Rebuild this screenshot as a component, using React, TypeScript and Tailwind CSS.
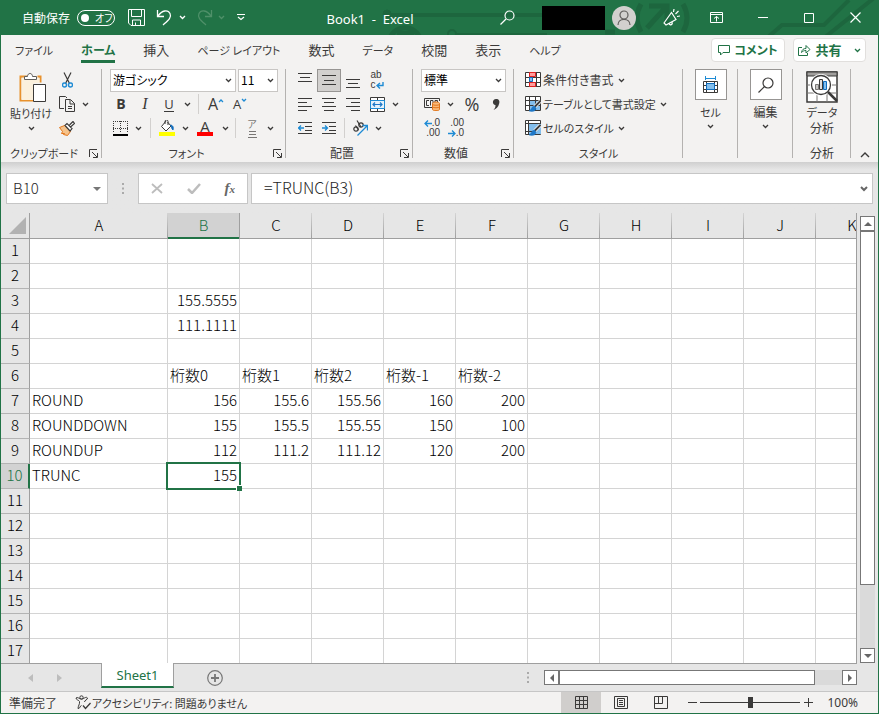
import React from "react";

type Kids = { children?: React.ReactNode };

const cellFont = "font-['Noto_Sans_CJK_JP',sans-serif]";

function Svg({ w, h, children, className = "" }: { w: number; h: number; className?: string } & Kids) {
  return (
    <svg width={w} height={h} viewBox={`0 0 ${w} ${h}`} fill="none" stroke="currentColor" className={`shrink-0 ${className}`} aria-hidden="true">
      {children}
    </svg>
  );
}

function Chev({ className = "" }: { className?: string }) {
  return (
    <Svg w={7} h={5} className={className}>
      <path d="M1 1l2.5 2.5L6 1" strokeWidth="1.3" />
    </Svg>
  );
}

function Btn({ label, className = "w-6", children }: { label: string; className?: string } & Kids) {
  return (
    <button type="button" aria-label={label} className={`flex h-6 shrink-0 items-center justify-center ${className}`}>
      {children}
    </button>
  );
}

function Drop({ label, className = "w-3" }: { label: string; className?: string }) {
  return (
    <Btn label={label} className={className}>
      <Chev />
    </Btn>
  );
}

function Group({ name, width, launcher, kana, children }: { name: string; width: string; launcher?: boolean; kana?: boolean } & Kids) {
  return (
    <section aria-label={name} className={`relative flex shrink-0 flex-col ${width}`}>
      <div className="h-[76px]">{children}</div>
      <div className="flex h-[18px] items-center">
        <span className={kana ? "flex-1 text-center text-[11px] whitespace-nowrap" : "flex-1 text-center whitespace-nowrap"}>{name}</span>
        {launcher && (
          <button type="button" aria-label={`${name}の設定`} className="mr-[3px] flex w-3 justify-center">
            <Svg w={9} h={9}>
              <path d="M.5 8V.5H8M3 3l5 5M8.5 4v4.500H4" />
            </Svg>
          </button>
        )}
      </div>
      <span className="absolute top-px right-0 bottom-1 w-px bg-[#b4b2b0]" />
    </section>
  );
}

function Row({ children, className = "pl-[7px]" }: { className?: string } & Kids) {
  return <div className={`flex h-6 items-center ${className}`}>{children}</div>;
}

function Combo({ label, value, width }: { label: string; value: string; width: string }) {
  return (
    <div className={`relative h-[23px] border border-[#c8c6c4] bg-white ${width}`}>
      <select aria-label={label} defaultValue={value} className="block h-full w-full appearance-none bg-transparent pl-[2px] text-xs text-black outline-none">
        <option>{value}</option>
      </select>
      <Chev className="pointer-events-none absolute top-2 right-[3px]" />
    </div>
  );
}

function Lines({ rows }: { rows: [number, number, number][] }) {
  return (
    <Svg w={14} h={17}>
      {rows.map(([x1, x2, y]) => (
        <path key={y} d={`M${x1} ${y}.5H${x2}`} />
      ))}
    </Svg>
  );
}

function StyleIcon({ kind }: { kind: "cond" | "table" | "cell" }) {
  return (
    <Svg w={16} h={16}>
      <path d="M.5.5h15v14H.5z" fill="#fff" />
      {kind === "cond" && (
        <>
          <path d="M.5 5.500h15M.5 10.500h15M4.500 1v13M11.500 1v13" />
          <path d="M4.500.5h6v4h-6zM4.500 10.500h6v4h-6z" fill="#ff9c9c" stroke="#e02020" />
          <path d="M4.500 5.500h3v4h-3z" fill="#83beec" stroke="#0f6cbd" />
        </>
      )}
      {kind === "table" && (
        <>
          <path d="M5 5h10v9H5z" fill="#83beec" stroke="none" />
          <path d="M.5 4.500h15M.5 9.500h15M4.500 1v13M10.500 1v13" />
        </>
      )}
      {kind === "cell" && (
        <>
          <path d="M4 4h12v10H4z" fill="#83beec" stroke="none" />
          <path d="M.5 3.500h15M3.500 1v13M.5 11.500h8" />
        </>
      )}
      {kind !== "cond" && (
        <>
          <path d="M15.500 5l-6 6" stroke="#f3f2f1" strokeWidth="3.500" />
          <path d="M15.500 5L9.500 11" strokeWidth="1.800" />
          <path d="M9.500 10c-3 0-2 3-5.500 5 3 1 7 .5 7-3z" fill="#1e78c8" stroke="#1e78c8" strokeWidth=".5" />
        </>
      )}
    </Svg>
  );
}

function TitleBar() {
  return (
    <header className="relative isolate flex h-[35px] shrink-0 items-center overflow-hidden bg-[#217346] text-xs text-white">
      <svg className="pointer-events-none absolute top-0 right-0 -z-10" width="500" height="35" viewBox="379 0 500 35" fill="none" stroke="#1d663e" aria-hidden="true">
        <circle cx="388" cy="14" r="4" fill="#1d663e" />
        <path d="M388 15h160" strokeWidth="4" />
        <path d="M390 46a16 16 0 1 1 32-4" strokeWidth="5" />
        <path d="M398 33h17" strokeWidth="4" />
        <circle cx="453" cy="34" r="4" strokeWidth="2" />
        <path d="M456 35h92" strokeWidth="4" />
        <path d="M606 32l10 0M642 4q-8 14 0 28M684 4q8 14 0 28" strokeWidth="5" />
        <path d="M650 6h18v18M668 6l-20 22" strokeWidth="5" />
        <path d="M768 38l15-13h42l25-25M825 38l50-40" strokeWidth="4" />
      </svg>
      <label htmlFor="autosave" className="ml-[21px]">自動保存</label>
      <span className="relative ml-[7px] flex h-4 w-[38px] items-center rounded-full border border-white">
        <input id="autosave" type="checkbox" className="absolute inset-0 m-0 appearance-none" />
        <span className="ml-[3px] h-2 w-2 shrink-0 rounded-full bg-white" />
        <span className="ml-[6px] text-[10px] leading-3 whitespace-nowrap [font-feature-settings:'palt']">オフ</span>
      </span>
      <div className="ml-[9px] flex items-center">
        <Btn label="上書き保存">
          <Svg w={17} h={17}>
            <path d="M.5.5h16v16H3L.5 14zM3.500 1v6.500h10V1M4.500 16v-5h8v5M7.500 16v-2.500" />
          </Svg>
        </Btn>
        <Btn label="元に戻す" className="ml-1 w-6">
          <Svg w={16} h={17}>
            <path d="M1.500 1v6.500H8M2 7C6 1 12 .5 14 4.500c2 4-2 7-7 11.500" strokeWidth="1.300" />
          </Svg>
        </Btn>
        <Drop label="元に戻す履歴" />
        <span className="ml-[9px] flex text-[#4f9069]">
          <Btn label="やり直し" className="w-4">
            <Svg w={16} h={17}>
              <path d="M14.500 1v6.500H8M14 7C10 1 4 .5 2 4.500c-2 4 2 7 7 11.500" strokeWidth="1.300" />
            </Svg>
          </Btn>
          <Drop label="やり直し履歴" className="w-4" />
        </span>
        <Btn label="クイック アクセス ツール バーのカスタマイズ">
          <Svg w={8} h={7}>
            <path d="M0 .5h8M1 3l3 2.500L7 3" strokeWidth="1.200" />
          </Svg>
        </Btn>
      </div>
      <h1 className="flex-1 pt-[2px] pr-2 text-center font-['Noto_Sans',sans-serif] text-[13px] leading-5 whitespace-pre">Book1  -  Excel</h1>
      <Btn label="検索">
        <Svg w={15} h={15}>
          <circle cx="9.500" cy="5.500" r="4.500" strokeWidth="1.200" />
          <path d="M6 9L.5 14.500" strokeWidth="1.200" />
        </Svg>
      </Btn>
      <span className="ml-[23px] h-6 w-[63px] bg-black" />
      <button type="button" aria-label="アカウント" className="ml-[7px] flex h-6 w-6 items-center justify-center rounded-full bg-[#d2d0ce] text-[#5f5d5b]">
        <Svg w={14} h={16}>
          <circle cx="7" cy="5" r="4" strokeWidth="1.200" />
          <path d="M1 15c0-7.500 12-7.500 12 0" strokeWidth="1.200" />
        </Svg>
      </button>
      <Btn label="近日公開の機能" className="ml-[23px] w-6">
        <Svg w={17} h={17}>
          <path d="M1 14L8.500 3.500 13 10.500 3 16zM6 14.500c1 2.500 4 1 3-1.500M10.500 3l.5-3M12.500 5l3-3M14 7.500l3-.5" strokeWidth="1.200" />
        </Svg>
      </Btn>
      <Btn label="リボンの表示オプション" className="ml-[21px] w-6">
        <Svg w={13} h={11}>
          <path d="M.5.5h12v10H.5zM.5 2.500h12M6.500 9.500v-5M4 6.500l2.500-2 2.500 2" />
        </Svg>
      </Btn>
      <Btn label="最小化" className="w-[46px] ml-3">
        <Svg w={10} h={2}><path d="M0 .5h10" /></Svg>
      </Btn>
      <Btn label="最大化" className="w-[46px]">
        <Svg w={10} h={10}><path d="M.5.5h9v9h-9z" /></Svg>
      </Btn>
      <Btn label="閉じる" className="w-[46px]">
        <Svg w={11} h={11}><path d="M.5.5l10 10M10.500.5l-10 10" strokeWidth="1.200" /></Svg>
      </Btn>
    </header>
  );
}

const tabs = [
  { text: "ファイル", kana: true },
  { text: "ホーム", active: true },
  { text: "挿入" },
  { text: "ページ レイアウト", kana: true },
  { text: "数式" },
  { text: "データ", kana: true },
  { text: "校閲" },
  { text: "表示" },
  { text: "ヘルプ", kana: true },
];

function Tabs() {
  return (
    <nav aria-label="リボン" className="flex h-[33px] shrink-0 items-center pr-3 pb-[3px] pl-[14px] text-xs">
      <div className="flex flex-1 items-center gap-7">
        {tabs.map((t) =>
          t.active ? (
            <button key={t.text} type="button" className="relative flex h-6 items-center font-bold whitespace-nowrap text-[#217346]">
              {t.text}
              <span className="absolute inset-x-0 -bottom-px h-[3px] bg-[#217346]" />
            </button>
          ) : (
            <button key={t.text} type="button" className={t.kana ? "h-6 text-[11px] leading-6 whitespace-nowrap" : "h-6 text-[13px] leading-6 whitespace-nowrap"}>
              {t.text}
            </button>
          )
        )}
      </div>
      <button type="button" className="flex h-6 w-[74px] items-center justify-center gap-1 rounded-sm border border-[#e1dfdd] bg-white font-bold whitespace-nowrap text-[#217346]">
        <Svg w={12} h={11}><path d="M.5.5h11v7H5l-2.500 2.500V7.500h-2z" /></Svg>
        コメント
      </button>
      <button type="button" className="ml-2 flex h-6 w-[73px] items-center justify-center gap-1 rounded-sm border border-[#e1dfdd] bg-white text-[13px] font-bold text-[#217346]">
        <Svg w={13} h={12}><path d="M4 3.500H.5v8h9V9M3.500 8.500c.5-3 2-4 4.500-4V1.500l4 4-4 3.500V6.500c-2 0-3 .5-4.500 2z" /></Svg>
        共有
        <Chev className="ml-2" />
      </button>
    </nav>
  );
}

function Ribbon() {
  return (
    <div className="flex h-[94px] shrink-0 text-xs leading-4 text-[#3b3a39]">
      <Group name="クリップボード" width="w-[101px]" launcher kana>
        <div className="flex pl-1">
          <button type="button" className="flex w-13 flex-col items-center pt-1 text-[11px] whitespace-nowrap">
            <Svg w={28} h={31} className="ml-1">
              <path d="M8.500 4.500h-7v24h13M18.500 4.500h3v6" stroke="#e8912d" strokeWidth="2" />
              <path d="M2.500 6h18v5h-6v17h-12z" fill="#fbf0dc" stroke="none" />
              <path d="M5.500 7.500v-3h3c0-4 5-4 5 0h4v3z" fill="#fff" stroke="#605e5c" />
              <path d="M14.500 12.500h12v17h-12z" fill="#fff" stroke="#3b3a39" />
            </Svg>
            <span className="mt-[2px]">貼り付け</span>
            <Chev className="mt-[5px]" />
          </button>
          <div>
            <Row className="">
              <Btn label="切り取り" className="w-5">
                <Svg w={11} h={16}>
                  <path d="M2 .5l5.500 11M9 .5L3.500 11.500" strokeWidth="1.200" />
                  <circle cx="2.500" cy="13" r="2" stroke="#1e8bd4" strokeWidth="1.400" />
                  <circle cx="8.500" cy="13" r="2" stroke="#1e8bd4" strokeWidth="1.400" />
                </Svg>
              </Btn>
            </Row>
            <Row className="">
              <Btn label="コピー" className="w-5">
                <Svg w={16} h={16}>
                  <path d="M5 12.500H.5V.5h6L8 2M6.500 3.500h5l4 4v8h-9zM11 4v4h4.500M9 10.500h4M9 12.500h4" />
                </Svg>
              </Btn>
              <Drop label="コピーのオプション" className="w-4" />
            </Row>
            <Row className="">
              <Btn label="書式のコピー/貼り付け" className="w-5">
                <Svg w={16} h={15}>
                  <path d="M.5 6.500l5-2 6 6-3 4-4-1 1-1-3 0 1-2z" fill="#f6c38b" stroke="#e2761b" />
                  <path d="M6 4.500l2-2 5 5-2 2.500zM10.500 4L14 .5l1.500 2-4 3.500" fill="#fff" strokeWidth="1.200" />
                </Svg>
              </Btn>
            </Row>
          </div>
        </div>
      </Group>

      <Group name="フォント" width="w-[184px]" launcher kana>
        <Row className="gap-[2px] pl-2">
          <Combo label="フォント名" value="游ゴシック" width="w-[126px]" />
          <Combo label="フォント サイズ" value="11" width="w-10" />
        </Row>
        <Row>
          <Btn label="太字"><span className="font-['Open_Sans',sans-serif] text-sm font-bold">B</span></Btn>
          <Btn label="斜体"><span className="font-['Liberation_Serif',serif] text-base italic">I</span></Btn>
          <Btn label="下線"><span className="border-b border-current font-['Open_Sans',sans-serif] text-[13px] leading-[14px]">U</span></Btn>
          <Drop label="下線の種類" />
          <span className="mx-[5px] h-5 w-px bg-[#d2d0ce]" />
          <Btn label="フォント サイズの拡大">
            <span className="font-['Open_Sans',sans-serif] text-base">A</span>
            <Svg w={6} h={12} className="text-[#1e8bd4]"><path d="M1 4l2-2 2 2" strokeWidth="1.300" /></Svg>
          </Btn>
          <Btn label="フォント サイズの縮小">
            <span className="font-['Open_Sans',sans-serif] text-[13px]">A</span>
            <Svg w={6} h={12} className="text-[#1e8bd4]"><path d="M1 1l2 2 2-2" strokeWidth="1.300" /></Svg>
          </Btn>
        </Row>
        <Row className="pl-2">
          <Btn label="罫線" className="w-5">
            <Svg w={15} h={15}>
              <path d="M0 .5h15M0 7.500h15M.5 0v12M7.500 0v12M14.500 0v12" strokeDasharray="1 1" />
              <path d="M0 14h15" stroke="#000" strokeWidth="2" />
            </Svg>
          </Btn>
          <Drop label="罫線の種類" className="w-4" />
          <span className="mx-1 h-5 w-px bg-[#d2d0ce]" />
          <Btn label="塗りつぶしの色">
            <Svg w={16} h={16}>
              <path d="M7 1L2.500 6.500 7 11l5-5-3.500-4M6 4V1.500a1.500 1.500 0 0 1 3 0V5" fill="#fff" />
              <path d="M11.500 5c3 .5 3 3 2.500 5-1.500-1-1-3-2.500-5z" fill="#0f6cbd" stroke="#0f6cbd" />
              <path d="M0 14h16" stroke="#ff0" strokeWidth="4" />
            </Svg>
          </Btn>
          <Drop label="塗りつぶしの色の選択" />
          <Btn label="フォントの色" className="w-7">
            <span className="flex w-4 flex-col items-center border-b-4 border-[#f00] font-['Open_Sans',sans-serif] text-[15px] leading-3">A</span>
          </Btn>
          <Drop label="フォントの色の選択" />
          <span className="mx-1 h-5 w-px bg-[#d2d0ce]" />
          <Btn label="ふりがなの表示">
            <span className="flex flex-col items-center gap-[2px] text-[10px] leading-[10px] text-[#797775]">
              ア
              <Svg w={9} h={7}><path d="M1 .5h7M1 3.500h7M0 6.500h9" /></Svg>
            </span>
          </Btn>
          <Drop label="ふりがなのオプション" />
        </Row>
      </Group>

      <Group name="配置" width="w-[127px]" launcher>
        <Row>
          <Btn label="上揃え"><Lines rows={[[0, 14, 1], [2, 12, 5], [0, 14, 9]]} /></Btn>
          <button type="button" aria-label="上下中央揃え" aria-pressed="true" className="flex h-[23px] w-6 items-center justify-center border border-[#979593] bg-[#d2d0ce]">
            <Lines rows={[[0, 14, 3], [2, 12, 8], [0, 14, 12]]} />
          </button>
          <Btn label="下揃え"><Lines rows={[[0, 14, 7], [2, 12, 11], [0, 14, 15]]} /></Btn>
          <Btn label="折り返して全体を表示する">
            <span className="flex flex-col items-start font-['Liberation_Sans',sans-serif] text-[10px] leading-[10px]">
              <span>ab</span>
              <span className="flex items-end">
                c
                <Svg w={8} h={8} className="text-[#1e8bd4]"><path d="M7 0v3.500H1M4 1L1 3.500 4 6.500" strokeWidth="1.400" /></Svg>
              </span>
            </span>
          </Btn>
        </Row>
        <Row>
          <Btn label="左揃え"><Lines rows={[[0, 14, 2], [0, 9, 6], [0, 14, 10], [0, 9, 14]]} /></Btn>
          <Btn label="中央揃え"><Lines rows={[[0, 14, 2], [2, 12, 6], [0, 14, 10], [2, 12, 14]]} /></Btn>
          <Btn label="右揃え"><Lines rows={[[0, 14, 2], [5, 14, 6], [0, 14, 10], [5, 14, 14]]} /></Btn>
          <Btn label="セルを結合して中央揃え">
            <Svg w={15} h={15}>
              <path d="M.5.5h14v14H.5zM7.500.5v3M7.500 11.500v3" fill="#fff" />
              <path d="M.5 3.500h14v8H.5z" fill="#e5f2fb" stroke="#1e8bd4" />
              <path d="M3 7.500h9M5 5.500l-2 2 2 2M10 5.500l2 2-2 2" stroke="#1e78c8" strokeWidth="1.200" />
            </Svg>
          </Btn>
          <Drop label="結合のオプション" />
        </Row>
        <Row>
          <Btn label="インデントを減らす">
            <Svg w={14} h={14}>
              <path d="M0 1.500h14M7 5.500h7M7 9.500h7M0 12.500h14" />
              <path d="M6 7H.5M3 4.500L.5 7 3 9.500" stroke="#1e8bd4" strokeWidth="1.300" />
            </Svg>
          </Btn>
          <Btn label="インデントを増やす">
            <Svg w={14} h={14}>
              <path d="M0 1.500h14M7 5.500h7M7 9.500h7M0 12.500h14" />
              <path d="M0 7h5.500M3 4.500L5.500 7 3 9.500" stroke="#1e8bd4" strokeWidth="1.300" />
            </Svg>
          </Btn>
          <span className="mx-[3px] h-5 w-px bg-[#d2d0ce]" />
          <Btn label="方向">
            <Svg w={16} h={16}>
              <circle cx="4" cy="9" r="2.200" strokeWidth="1.200" />
              <path d="M3.500 5.500L6.500 10M5 .5l4 6.500" strokeWidth="1.200" />
              <circle cx="9" cy="5" r="2.200" strokeWidth="1.200" />
              <path d="M5.500 15.500L15 6M10.500 5.500H15.500v5" stroke="#1e8bd4" strokeWidth="1.300" />
            </Svg>
          </Btn>
          <Drop label="方向のオプション" />
        </Row>
      </Group>

      <Group name="数値" width="w-[101px]" launcher>
        <Row className="pl-2"><Combo label="表示形式" value="標準" width="w-[85px]" /></Row>
        <Row>
          <Btn label="通貨表示形式">
            <Svg w={16} h={14}>
              <path d="M15.500 4V1.500H.5v9H8M5 3.500H2.500v5H5M9 8V3.500H6.500v5M11 6V3.500h2.500V5" />
              <path d="M8.500 6.500c0-2 7-2 7 0v6c0 1.500-7 1.500-7 0z" fill="#f9b978" stroke="#e2761b" />
              <path d="M8.500 7.500c1 1 6 1 7 0M8.500 10c1 1 6 1 7 0" stroke="#e2761b" />
            </Svg>
          </Btn>
          <Drop label="通貨の選択" />
          <Btn label="パーセント スタイル" className="w-8"><span className="font-['Open_Sans',sans-serif] text-lg">%</span></Btn>
          <Btn label="桁区切りスタイル" className="w-4">
            <Svg w={8} h={13}><path d="M4 1c3 0 4 2 3 5-.5 3-3 5-5.500 6 1.500-1.500 2-3 2-5C0 7 0 1 4 1z" fill="currentColor" stroke="none" /></Svg>
          </Btn>
        </Row>
        <Row>
          <Btn label="小数点以下の表示桁数を増やす">
            <span className="flex flex-col items-end font-['Liberation_Sans',sans-serif] text-[10px] leading-[10px]">
              <span className="flex items-center">
                <Svg w={8} h={7} className="text-[#1e8bd4]"><path d="M8 3.500H1M4 .5l-3 3 3 3" strokeWidth="1.300" /></Svg>
                .0
              </span>
              <span>.00</span>
            </span>
          </Btn>
          <Btn label="小数点以下の表示桁数を減らす">
            <span className="flex flex-col items-end font-['Liberation_Sans',sans-serif] text-[10px] leading-[10px]">
              <span>.00</span>
              <span className="flex items-center">
                <Svg w={8} h={7} className="text-[#1e8bd4]"><path d="M0 3.500h7M4 .5l3 3-3 3" strokeWidth="1.300" /></Svg>
                .0
              </span>
            </span>
          </Btn>
        </Row>
      </Group>

      <Group name="スタイル" width="w-[169px]" kana>
        <Row className="pl-[11px]">
          <button type="button" className="flex items-center gap-[2px] whitespace-nowrap">
            <StyleIcon kind="cond" />
            条件付き書式
            <Chev className="ml-[2px]" />
          </button>
        </Row>
        {(
          [["table", "テーブルとして書式設定"], ["cell", "セルのスタイル"]] as const
        ).map(([kind, text]) => (
          <Row key={kind} className="pl-[11px]">
            <button type="button" className="flex items-center gap-[2px] text-[11px] whitespace-nowrap">
              <StyleIcon kind={kind} />
              {text}
              <Chev className="ml-[2px]" />
            </button>
          </Row>
        ))}
      </Group>

      <Group name="" width="w-[55px]">
        <button type="button" className="flex w-full flex-col items-center pt-px text-[11px]">
          <span className="flex h-[31px] w-8 items-center justify-center border border-[#979593] bg-white">
            <Svg w={17} h={18}>
              <path d="M1.500 5.500h14v11h-14zM1.500 9.500h14M1.500 13.500h14M4.500 5v12M12.500 5v12" />
              <path d="M4.500 7.500h8v6h-8z" fill="#83beec" stroke="#0f6cbd" />
              <path d="M3.500 0v4M13.500 0v4M4 2.500h9" stroke="#1e8bd4" />
            </Svg>
          </span>
          <span className="mt-1">セル</span>
          <Chev className="mt-1" />
        </button>
      </Group>

      <Group name="" width="w-[55px]">
        <button type="button" className="flex w-full flex-col items-center pt-px">
          <span className="flex h-[31px] w-8 items-center justify-center border border-[#979593] bg-white">
            <Svg w={16} h={16}>
              <circle cx="10" cy="6" r="5" strokeWidth="1.200" />
              <path d="M6.500 9.500l-6 6" strokeWidth="1.200" />
            </Svg>
          </span>
          <span className="mt-1">編集</span>
          <Chev className="mt-1" />
        </button>
      </Group>

      <Group name="分析" width="w-[58px]">
        <button type="button" className="flex w-full flex-col items-center pt-[3px] leading-[15px]">
          <Svg w={32} h={32}>
            <path d="M1 1h30v30H1z" fill="#fff" strokeWidth="1.500" />
            <path d="M1 1h30v4H1z" fill="#a19f9d" />
            <path d="M1 14h30M1 22h30M11 5v26M21 5v26" stroke="#797775" />
            <circle cx="15" cy="14" r="9.500" fill="#fff" stroke="#fff" strokeWidth="3" />
            <circle cx="15" cy="14" r="9.500" fill="#fff" strokeWidth="1.300" />
            <path d="M22 21l9 9" strokeWidth="2.500" />
            <path d="M9.500 13.500h3v5h-3z" fill="#c8c6c4" stroke="#797775" />
            <path d="M13.500 8.500h3v10h-3z" fill="#e1dfdd" />
            <path d="M17.500 10.500h3v8h-3z" fill="#83beec" stroke="#0f6cbd" />
          </Svg>
          <span className="mt-[2px] text-[11px]">データ</span>
          <span>分析</span>
        </button>
      </Group>
      <div className="flex flex-1 items-end justify-center pb-1">
        <button type="button" aria-label="リボンを折りたたむ">
          <Svg w={10} h={6}><path d="M1 5l4-4 4 4" strokeWidth="1.400" /></Svg>
        </button>
      </div>
    </div>
  );
}

function FormulaBar() {
  return (
    <div className={`flex h-[51px] shrink-0 items-start bg-linear-to-b from-[#cfcfcf] via-[#e6e6e6] via-15% to-[#e6e6e6] pt-[11px] pr-[5px] pl-[5px] text-[#262626] ${cellFont}`}>
      <div className="flex h-[31px] w-[102px] items-center border border-[#c6c6c6] bg-white">
        <input aria-label="名前ボックス" defaultValue="B10" className="w-0 flex-1 bg-transparent pl-[6px] text-[15px] font-light outline-none" />
        <button type="button" aria-label="名前の一覧" className="mr-[6px]">
          <Svg w={8} h={4} className="text-[#777]"><path d="M0 0h8L4 4z" fill="currentColor" stroke="none" /></Svg>
        </button>
      </div>
      <span className="flex h-[31px] w-[30px] items-center justify-center">
        <Svg w={2} h={11} className="text-[#aaa]"><path d="M1 0v11" strokeWidth="2" strokeDasharray="2 2.500" /></Svg>
      </span>
      <div className="flex h-[31px] w-[110px] items-center justify-around border border-[#c6c6c6] bg-white">
        <button type="button" aria-label="キャンセル">
          <Svg w={12} h={11} className="text-[#bdbdbd]"><path d="M1 1l10 9M11 1L1 10" strokeWidth="1.800" /></Svg>
        </button>
        <button type="button" aria-label="入力">
          <Svg w={14} h={11} className="text-[#bdbdbd]"><path d="M1 6l4 4 8-9" strokeWidth="2.500" /></Svg>
        </button>
        <button type="button" aria-label="関数の挿入" className="font-['Liberation_Serif',serif] text-[15px] leading-4 font-bold italic text-[#666]">
          f<span className="text-[11px]">x</span>
        </button>
      </div>
      <div className="ml-[3px] flex h-[31px] flex-1 items-center border border-[#c6c6c6] bg-white">
        <input aria-label="数式バー" defaultValue="=TRUNC(B3)" className="w-0 flex-1 bg-transparent pb-[3px] pl-3 text-base font-light outline-none" />
        <button type="button" aria-label="数式バーの展開" className="mr-1">
          <Svg w={8} h={6} className="text-[#666]"><path d="M1 1l3 3 3-3" strokeWidth="2" /></Svg>
        </button>
      </div>
    </div>
  );
}

const columns = ["A", "B", "C", "D", "E", "F", "G", "H", "I", "J", "K"];
const data: Record<number, string[]> = {
  3: ["", "155.5555"],
  4: ["", "111.1111"],
  6: ["", "桁数0", "桁数1", "桁数2", "桁数-1", "桁数-2"],
  7: ["ROUND", "156", "155.6", "155.56", "160", "200"],
  8: ["ROUNDDOWN", "155", "155.5", "155.55", "150", "100"],
  9: ["ROUNDUP", "112", "111.2", "111.12", "120", "200"],
  10: ["TRUNC", "155"],
};

function Grid() {
  return (
    <div className={`min-w-0 flex-1 overflow-hidden border-r border-[#9f9f9f] ${cellFont}`}>
      <table className="w-[887px] table-fixed border-separate border-spacing-0 bg-white text-[15px] leading-5 font-light text-black">
        <colgroup>
          <col className="w-[29px]" />
          <col className="w-[138px]" />
          {columns.slice(1).map((c) => (
            <col key={c} className="w-[72px]" />
          ))}
        </colgroup>
        <thead>
          <tr className="h-[26px]">
            <th className="border-r border-b border-[#9f9f9f] bg-[#e6e6e6] p-0">
              <Svg w={18} h={17} className="mr-[2px] ml-auto text-[#b2b2b2]"><path d="M17 0v17H0z" fill="currentColor" stroke="none" /></Svg>
            </th>
            {columns.map((c) =>
              c === "B" ? (
                <th key={c} scope="col" className="relative border-r border-b border-[#9f9f9f] bg-[#d2d2d2] p-0 pb-[2px] font-light text-[#217346]">
                  {c}
                  <span className="absolute inset-x-0 -bottom-px h-[2px] bg-[#217346]" />
                </th>
              ) : (
                <th key={c} scope="col" className="relative border-b border-[#9f9f9f] bg-[#e6e6e6] p-0 pb-[2px] font-light">
                  {c}
                  <span className="absolute inset-y-0 right-0 w-px bg-linear-to-b from-[#d4d4d4] to-[#9f9f9f]" />
                </th>
              )
            )}
          </tr>
        </thead>
        <tbody>
          {Array.from({ length: 17 }, (_, i) => i + 1).map((r) => (
            <tr key={r} className="h-[25px]">
              <th scope="row" className={r === 10 ? "border-r-2 border-b border-r-[#217346] border-b-[#b4b4b4] bg-[#d2d2d2] p-0 pb-[2px] font-light text-[#217346]" : "border-r border-b border-r-[#9f9f9f] border-b-[#b4b4b4] bg-[#e6e6e6] p-0 pb-[2px] font-light"}>{r}</th>
              {columns.map((c, ci) => {
                const value = data[r]?.[ci] ?? "";
                const right = ci > 0 && r !== 6;
                return (
                  <td key={c} className={right ? "relative border-r border-b border-[#d4d4d4] px-[2px] pt-0 pb-[2px] text-right" : "relative border-r border-b border-[#d4d4d4] px-[2px] pt-0 pb-[2px] text-left"}>
                    {value}
                    {r === 10 && c === "B" && (
                      <span className="absolute -top-[2px] -right-[2px] -bottom-[2px] -left-[2px] z-10 border-2 border-[#217346]">
                        <span className="absolute -right-[3px] -bottom-[3px] h-[6px] w-[6px] border-t border-l border-white bg-[#217346]" />
                      </span>
                    )}
                  </td>
                );
              })}
            </tr>
          ))}
        </tbody>
      </table>
    </div>
  );
}

function ScrollButton({ label, d }: { label: string; d: string }) {
  return (
    <button type="button" aria-label={label} className="flex h-[15px] w-[15px] shrink-0 items-center justify-center border border-[#777] bg-white text-[#666]">
      <Svg w={8} h={8}><path d={d} fill="currentColor" stroke="none" /></Svg>
    </button>
  );
}

function SheetBar() {
  return (
    <div className="flex h-[28px] shrink-0 items-start">
      <div className="flex h-full w-[100px] items-center gap-6 border-t border-[#9f9f9f] pl-[27px] text-[#bdbdbd]">
        <Svg w={5} h={8}><path d="M5 0v8L0 4z" fill="currentColor" stroke="none" /></Svg>
        <Svg w={5} h={8}><path d="M0 0v8l5-4z" fill="currentColor" stroke="none" /></Svg>
      </div>
      <button type="button" className="h-[25px] w-[73px] border-x border-b-2 border-x-[#9f9f9f] border-b-[#217346] bg-white font-['Noto_Sans',sans-serif] text-[13px] leading-5 text-[#217346]">Sheet1</button>
      <div className="flex h-full flex-1 items-center border-t border-[#9f9f9f]">
        <button type="button" aria-label="新しいシート" className="ml-[33px]">
          <Svg w={16} h={16} className="text-[#777]">
            <circle cx="8" cy="8" r="7.300" strokeWidth="1.200" />
            <path d="M8 4v8M4 8h8" strokeWidth="1.800" />
          </Svg>
        </button>
        <Svg w={2} h={11} className="ml-auto text-[#aaa]"><path d="M1 0v11" strokeWidth="2" strokeDasharray="2 2.500" /></Svg>
        <div className="ml-[15px] flex w-[313px] bg-[#dadada]">
          <ScrollButton label="左へスクロール" d="M6 0v8L2 4z" />
          <span className="h-[15px] w-[256px] border border-[#777] bg-white" />
          <span className="flex-1" />
          <ScrollButton label="右へスクロール" d="M2 0v8l4-4z" />
        </div>
      </div>
      <span className="w-[21px]" />
    </div>
  );
}

function StatusBar() {
  return (
    <footer className="flex h-[22px] shrink-0 items-center border-t border-[#c6c6c6] bg-[#f3f2f1] text-xs leading-4 text-[#3b3a39]">
      <span className="ml-2">準備完了</span>
      <button type="button" className="ml-[18px] flex items-center gap-px text-[11px] whitespace-nowrap">
        <Svg w={16} h={15}>
          <circle cx="6.500" cy="2.500" r="1.700" />
          <path d="M1 3c0 2 3 2 3.500 3.500C5 9 3 11 3 13.500c2 .5 2-3 3.500-3M12.500 3c0 2-3 2-3 4M1 3c1.500-1.500 3 1 5.500 1S11 1 12.500 3" />
          <path d="M8 10.500l2.500 3 5-5.500" strokeWidth="1.300" />
        </Svg>
        アクセシビリティ: 問題ありません
      </button>
      <div className="ml-auto flex h-full items-center">
        <button type="button" aria-label="標準" aria-pressed="true" className="flex h-full w-10 items-center justify-center bg-[#d0cecc]">
          <Svg w={13} h={13}><path d="M.5.5h12v12H.5zM4.500 0v13M8.500 0v13M0 4.500h13M0 8.500h13" /></Svg>
        </button>
        <button type="button" aria-label="ページ レイアウト" className="flex h-full w-10 items-center justify-center">
          <Svg w={14} h={13}><path d="M.5.5h13v12H.5zM3.500 2.500h7v8h-7zM5 4.500h4M5 6.500h4M5 8.500h4" /></Svg>
        </button>
        <button type="button" aria-label="改ページ プレビュー" className="flex h-full w-10 items-center justify-center">
          <Svg w={14} h={13}><path d="M.5.5h13v12H.5zM.5 7.500h8V.5M4.500.5v7" /></Svg>
        </button>
        <button type="button" aria-label="縮小" className="ml-1 flex h-4 w-[14px] items-center justify-center"><Svg w={9} h={9}><path d="M0 4.500h9" /></Svg></button>
        <input
          type="range"
          aria-label="ズーム"
          min="10"
          max="190"
          defaultValue="100"
          className="mx-px h-3 w-[100px] appearance-none bg-[linear-gradient(#3b3a39,#3b3a39)] bg-[length:100%_1px] bg-center bg-no-repeat [&::-webkit-slider-thumb]:h-[11px] [&::-webkit-slider-thumb]:w-[5px] [&::-webkit-slider-thumb]:appearance-none [&::-webkit-slider-thumb]:bg-[#3b3a39]"
        />
        <button type="button" aria-label="拡大" className="flex h-4 w-[14px] items-center justify-center"><Svg w={9} h={9}><path d="M0 4.500h9M4.500 0v9" /></Svg></button>
        <span className="mr-5 w-[43px] text-right font-['Noto_Sans',sans-serif]">100%</span>
      </div>
    </footer>
  );
}

export default function App() {
  return (
    <div className="flex min-h-screen w-full flex-col overflow-hidden border-x border-b border-[#217346] bg-[#e6e6e6] font-['Noto_Sans_CJK_JP',sans-serif] text-[#3b3a39]">
      <TitleBar />
      <div className="bg-[#f3f2f1] [font-feature-settings:'palt']">
        <Tabs />
        <Ribbon />
      </div>
      <FormulaBar />
      <main className="flex h-[450px]">
        <Grid />
        <div className="mt-[3px] mr-[3px] ml-[3px] flex w-[15px] flex-col bg-[#dadada]">
          <ScrollButton label="上へスクロール" d="M0 6h8L4 2z" />
          <span className="h-[354px] w-[15px] border border-[#777] bg-white" />
          <span className="flex-1" />
          <ScrollButton label="下へスクロール" d="M0 2h8L4 6z" />
        </div>
      </main>
      <SheetBar />
      <div className="mt-auto [font-feature-settings:'palt']">
        <StatusBar />
      </div>
    </div>
  );
}
